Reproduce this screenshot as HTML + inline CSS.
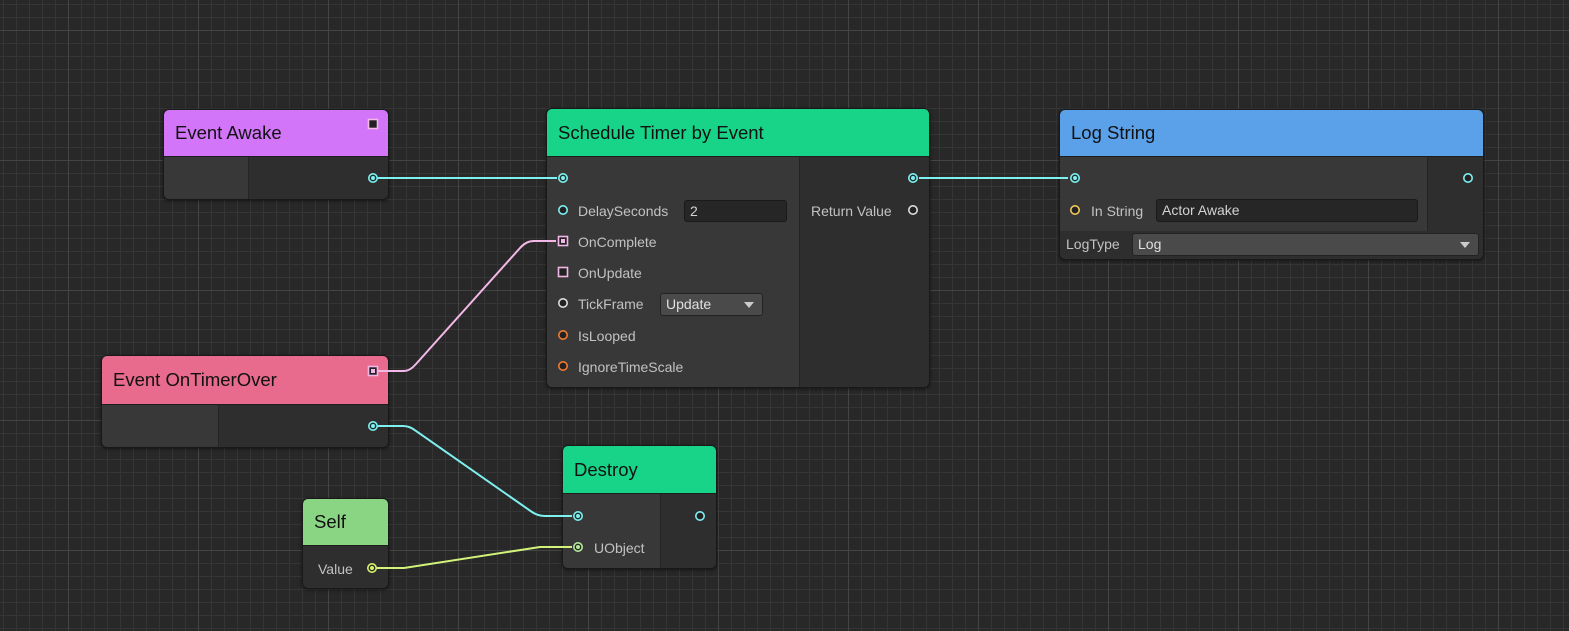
<!DOCTYPE html>
<html><head><meta charset="utf-8"><style>
*{margin:0;padding:0;box-sizing:border-box}
body{width:1569px;height:631px;overflow:hidden;background:#282828;font-family:"Liberation Sans",sans-serif;position:relative}
.grid{position:absolute;inset:0;
background-image:
linear-gradient(to right,#444 1px,transparent 1px),
linear-gradient(to bottom,#444 1px,transparent 1px),
linear-gradient(to right,#353535 1px,transparent 1px),
linear-gradient(to bottom,#353535 1px,transparent 1px);
background-size:130px 130px,130px 130px,13px 13px,13px 13px;
background-position:68px 0,0 30px,3px 0,0 4px}
.node{position:absolute;border:1px solid #191919;border-radius:6px;overflow:hidden;background:#2e2e2e;box-shadow:0 1px 3px rgba(0,0,0,.5)}
.hd{position:absolute;left:0;right:0;top:0;color:#111;font-size:18.5px;padding-left:11px;display:flex;align-items:center;border-bottom:1px solid #1e1e1e}
.lp{position:absolute;background:#383838;border-right:1px solid #242424}
.t{position:absolute;color:#c2c2c2;font-size:14px;line-height:16px;white-space:nowrap}
.fld{position:absolute;background:#262626;border:1px solid #1a1a1a;border-radius:3px;color:#d2d2d2;font-size:14px;padding-left:5px;line-height:20px}
.dd{position:absolute;background:#4a4a4a;border:1px solid #222;border-radius:3px;color:#e0e0e0;font-size:14px;padding-left:5px;line-height:20px}
.dd:after{content:"";position:absolute;right:8px;top:8px;border-left:5px solid transparent;border-right:5px solid transparent;border-top:6px solid #ccc}
svg{position:absolute;left:0;top:0}
</style></head><body>
<div class="grid"></div>

<div class="node" style="left:163px;top:109px;width:226px;height:91px">
<div class="hd" style="height:47px;background:#d275f9">Event Awake</div>
<div class="lp" style="left:0;top:47px;width:85px;height:44px"></div>
</div>

<div class="node" style="left:546px;top:108px;width:384px;height:280px">
<div class="hd" style="height:48px;background:#17d488">Schedule Timer by Event</div>
<div class="lp" style="left:0;top:48px;width:253px;height:232px"></div>
<div class="t" style="left:31px;top:94px">DelaySeconds</div>
<div class="fld" style="left:137px;top:91px;width:103px;height:22px">2</div>
<div class="t" style="left:31px;top:125px">OnComplete</div>
<div class="t" style="left:31px;top:156px">OnUpdate</div>
<div class="t" style="left:31px;top:187px">TickFrame</div>
<div class="dd" style="left:113px;top:184px;width:103px;height:23px">Update</div>
<div class="t" style="left:31px;top:219px">IsLooped</div>
<div class="t" style="left:31px;top:250px">IgnoreTimeScale</div>
<div class="t" style="left:264px;top:94px">Return Value</div>
</div>

<div class="node" style="left:1059px;top:109px;width:425px;height:151px">
<div class="hd" style="height:47px;background:#5ba1ea">Log String</div>
<div class="lp" style="left:0;top:47px;width:368px;height:82px"></div>
<div class="t" style="left:31px;top:93px">In String</div>
<div class="fld" style="left:96px;top:89px;width:262px;height:23px">Actor Awake</div>
<div style="position:absolute;left:0;top:121px;width:425px;height:30px;background:#2e2e2e"></div>
<div class="t" style="left:6px;top:126px">LogType</div>
<div class="dd" style="left:72px;top:123px;width:347px;height:23px">Log</div>
</div>

<div class="node" style="left:101px;top:355px;width:288px;height:93px">
<div class="hd" style="height:49px;background:#e86a8c">Event OnTimerOver</div>
<div class="lp" style="left:0;top:49px;width:117px;height:44px"></div>
</div>

<div class="node" style="left:562px;top:445px;width:155px;height:124px">
<div class="hd" style="height:48px;background:#17d488">Destroy</div>
<div class="lp" style="left:0;top:48px;width:98px;height:76px"></div>
<div class="t" style="left:31px;top:94px">UObject</div>
</div>

<div class="node" style="left:302px;top:498px;width:87px;height:91px">
<div class="hd" style="height:47px;background:#8ad584">Self</div>
<div class="t" style="left:15px;top:62px">Value</div>
</div>

<svg width="1569" height="631" viewBox="0 0 1569 631">
<g fill="none" stroke-width="2">
<path d="M378 178H557" stroke="#7ff0f0"/>
<path d="M919 178H1068" stroke="#7ff0f0"/>
<path d="M378 371H404Q410 371 416 364L520 248Q526 241 534 241H556" stroke="#f4b8e8"/>
<path d="M378 426H403Q410 426 416 431L532 512Q538 516 545 516H572" stroke="#7ff0f0"/>
<path d="M376 568H404L540 547H572" stroke="#d2f27a"/>
</g>
<g stroke-width="1.6">
<circle cx="373" cy="178" r="4.2" fill="#1e2e2e" stroke="#7ff0f0"/><circle cx="373" cy="178" r="2" fill="#7ff0f0"/>
<circle cx="373" cy="426" r="4.2" fill="#1e2e2e" stroke="#7ff0f0"/><circle cx="373" cy="426" r="2" fill="#7ff0f0"/>
<circle cx="563" cy="178" r="4.2" fill="#1e2e2e" stroke="#7ff0f0"/><circle cx="563" cy="178" r="2" fill="#7ff0f0"/>
<circle cx="913" cy="178" r="4.2" fill="#1e2e2e" stroke="#7ff0f0"/><circle cx="913" cy="178" r="2" fill="#7ff0f0"/>
<circle cx="1075" cy="178" r="4.2" fill="#1e2e2e" stroke="#7ff0f0"/><circle cx="1075" cy="178" r="2" fill="#7ff0f0"/>
<circle cx="1468" cy="178" r="4.2" fill="#222" stroke="#7ff0f0"/>
<circle cx="578" cy="516" r="4.2" fill="#1e2e2e" stroke="#7ff0f0"/><circle cx="578" cy="516" r="2" fill="#7ff0f0"/>
<circle cx="700" cy="516" r="4.2" fill="#222" stroke="#7ff0f0"/>
<circle cx="578" cy="547" r="4.2" fill="#1e2e1e" stroke="#b8e8a0"/><circle cx="578" cy="547" r="2" fill="#b8e8a0"/>
<circle cx="372" cy="568" r="4.2" fill="#2a2e1e" stroke="#d8f070"/><circle cx="372" cy="568" r="2" fill="#d8f070"/>
<circle cx="563" cy="210" r="4.2" fill="#222" stroke="#7ff0f0"/>
<circle cx="913" cy="210" r="4.2" fill="#222" stroke="#ddd"/>
<circle cx="563" cy="303" r="4.2" fill="#222" stroke="#ddd"/>
<circle cx="563" cy="335" r="4.2" fill="#222" stroke="#f07a30"/>
<circle cx="563" cy="366" r="4.2" fill="#222" stroke="#f07a30"/>
<circle cx="1075" cy="210" r="4.2" fill="#222" stroke="#f2c85a"/>
<rect x="558.5" y="236.5" width="9" height="9" fill="#222" stroke="#f4b8e8"/><rect x="561" y="239" width="4" height="4" fill="#f4b8e8" stroke="none"/>
<rect x="558.5" y="267.5" width="9" height="9" fill="#222" stroke="#f4b8e8"/>
<rect x="368.5" y="366.5" width="9" height="9" fill="#222" stroke="#f4b8e8"/><rect x="371" y="369" width="4" height="4" fill="#f4b8e8" stroke="none"/>
<rect x="368.5" y="119.5" width="9" height="9" fill="#222" stroke="#f4b8e8"/>
</g>
</svg>
</body></html>
